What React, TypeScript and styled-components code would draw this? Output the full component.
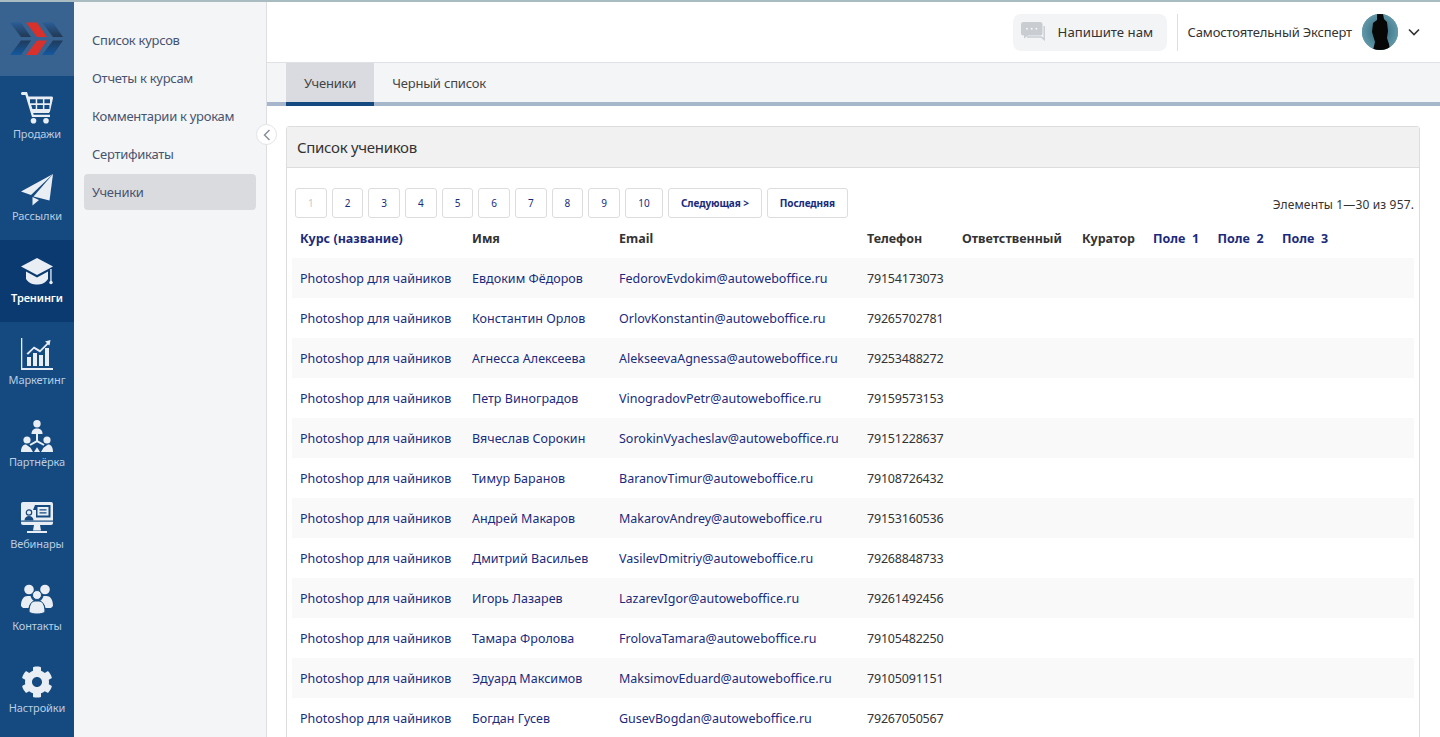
import styled, { createGlobalStyle } from "styled-components";
import { FaCog } from "react-icons/fa";

const GlobalStyle = createGlobalStyle`
  html, body {
    margin: 0;
    height: 100%;
    overflow: hidden;
    background: #fff;
    font-family: "Noto Sans", "Open Sans", sans-serif;
  }
  * { box-sizing: border-box; }
`;

// Page frame
const Page = styled.div`
  width: 100vw;
  height: 100vh;
  display: flex;
  border-top: 2px solid #a9bcc2;
  overflow: hidden;
`;

const Rail = styled.nav`
  width: 74px;
  flex: none;
  background: #154a80;
  display: flex;
  flex-direction: column;
`;

const LogoBox = styled.div`
  height: 74px;
  flex: none;
  background: #38628f;
  padding: 20px 0 0 10px;
`;

const RailItem = styled.a<{ $active?: boolean }>`
  height: 82px;
  flex: none;
  padding-top: 16px;
  display: flex;
  flex-direction: column;
  align-items: center;
  gap: 2px;
  font-size: 11px;
  line-height: 16px;
  letter-spacing: -0.1px;
  color: ${(p) => (p.$active ? "#fff" : "#b9cde2")};
  font-weight: ${(p) => (p.$active ? 600 : 400)};
  background: ${(p) => (p.$active ? "#0b3a70" : "transparent")};
  svg { display: block; width: 32px; height: 32px; color: #e9eef5; }
`;

const SubNav = styled.aside`
  width: 193px;
  flex: none;
  position: relative;
  background: #f4f5f7;
  border-right: 1px solid #dcdee2;
  padding: 20px 10px 0;
  display: flex;
  flex-direction: column;
  gap: 2px;
`;

const SubLink = styled.a<{ $active?: boolean }>`
  height: 36px;
  padding: 0 8px;
  display: flex;
  align-items: center;
  border-radius: 4px;
  font-size: 13px;
  letter-spacing: -0.28px;
  color: #46546f;
  background: ${(p) => (p.$active ? "#dadbdf" : "transparent")};
`;

const Collapse = styled.button`
  position: absolute;
  top: 122px;
  right: -11px;
  width: 21px;
  height: 21px;
  padding: 0;
  border-radius: 50%;
  border: 1px solid #e2e4e8;
  background: #fff;
  display: flex;
  align-items: center;
  justify-content: center;
  z-index: 2;
`;

const Main = styled.main`
  flex: 1;
  min-width: 0;
  display: flex;
  flex-direction: column;
`;

const TopBar = styled.header`
  height: 61px;
  flex: none;
  background: #fff;
  border-bottom: 1px solid #dfe1e4;
  padding-right: 20px;
  display: flex;
  align-items: center;
  justify-content: flex-end;
`;

const WriteUs = styled.button`
  width: 154px;
  height: 37px;
  border: 0;
  border-radius: 8px;
  background: #f3f4f6;
  padding: 0 0 0 8px;
  display: flex;
  align-items: center;
  gap: 12px;
  font: inherit;
  font-size: 13.2px;
  color: #333;
`;

const Divider = styled.div`
  width: 1px;
  height: 37px;
  margin: 0 10px;
  background: #dcdee0;
`;

const UserName = styled.span`
  font-size: 13px;
  letter-spacing: -0.16px;
  color: #333;
`;

const Avatar = styled.div`
  width: 36px;
  height: 36px;
  margin: 0 10px;
  border-radius: 50%;
  overflow: hidden;
  background: #4f8a9d;
  svg { display: block; }
`;

const TabBar = styled.div`
  height: 43px;
  flex: none;
  padding-left: 19px;
  background: #f4f5f7;
  border-bottom: 4px solid #a7b7cb;
  display: flex;
`;

const Tab = styled.a<{ $active?: boolean }>`
  height: 43px;
  padding: 0 18px;
  display: flex;
  align-items: center;
  font-size: 13px;
  letter-spacing: -0.2px;
  color: #444;
  background: ${(p) => (p.$active ? "#d9dbe0" : "transparent")};
  border-bottom: 4px solid ${(p) => (p.$active ? "#154a80" : "transparent")};
`;

const Content = styled.div`
  flex: 1;
  min-height: 0;
  padding: 20px 20px 0 19px;
`;

const Panel = styled.section`
  border: 1px solid #dddddd;
  border-radius: 3px 3px 0 0;
  height: 800px;
  background: #fff;
`;

const PanelTitle = styled.h2`
  margin: 0;
  height: 41px;
  padding: 0 10px;
  display: flex;
  align-items: center;
  font-size: 15px;
  font-weight: 400;
  letter-spacing: -0.3px;
  color: #333;
  background: #f1f1f1;
  border-bottom: 1px solid #dddddd;
`;

const PanelBody = styled.div`
  padding: 20px 5px 0 5px;
`;

const PagerRow = styled.div`
  height: 30px;
  display: flex;
  align-items: center;
  justify-content: space-between;
  padding-left: 3px;
`;

const Pager = styled.div`
  display: flex;
  gap: 5px;
`;

const PageBtn = styled.a<{ $disabled?: boolean; $bold?: boolean; $w: number }>`
  width: ${(p) => p.$w}px;
  height: 30px;
  display: flex;
  align-items: center;
  justify-content: center;
  background: #fff;
  border: 1px solid #dddddd;
  border-radius: 3px;
  font-size: 10px;
  font-weight: ${(p) => (p.$bold ? 700 : 400)};
  letter-spacing: -0.1px;
  color: ${(p) => (p.$disabled ? "#c8c8c8" : "#1a2b7c")};
`;

const Counter = styled.div`
  font-size: 12px;
  letter-spacing: 0.14px;
  color: #333;
  padding: 3px 0 0;
`;

const Row = styled.div<{ $striped?: boolean }>`
  height: 40px;
  display: grid;
  grid-template-columns: 172px 147px 248px 95px 120px 71px 64.5px 64.5px 1fr;
  align-items: center;
  font-size: 12.5px;
  background: ${(p) => (p.$striped ? "#f9f9f9" : "#fff")};
`;

const HeadCell = styled.div<{ $link?: boolean }>`
  padding-left: 8px;
  font-size: 12.5px;
  font-weight: 700;
  white-space: pre;
  color: ${(p) => (p.$link ? "#1a2b7c" : "#333")};
`;

const Cell = styled.a<{ $link?: boolean; $spacing: number }>`
  padding-left: 8px;
  white-space: nowrap;
  letter-spacing: ${(p) => p.$spacing}px;
  color: ${(p) => (p.$link ? "#1a2b7c" : "#333")};
`;

const CartIcon = () => (
  <svg viewBox="0 0 32 32" fill="currentColor">
    <path d="M0 1.500c0-.8.700-1.500 1.500-1.500H6l1.500 4.500H30.500c1 0 1.700.9 1.500 1.800l-3 13.200c-.2.900-1 1.500-1.900 1.500H12.200l.5 1.700H29v2.300H11L4.400 3H1.500C.7 3 0 2.300 0 1.500z" />
    <path fill="#154a80" d="M9 7.300h5.700v3.900H9zM16.200 7.300h5.700v3.900h-5.700zM23.400 7.300h5.600v3.900h-5.600zM10.200 13h4.500v4h-3.300zM16.200 13h5.700v4h-5.700zM23.400 13h5v4h-5z" />
    <circle cx="12.500" cy="28.800" r="2.800" />
    <circle cx="25" cy="28.800" r="2.800" />
  </svg>
);

const PlaneIcon = () => (
  <svg viewBox="0 0 32 32" fill="currentColor">
    <path d="M32 0 L0 17.500 L10 21 Z" />
    <path d="M32 0 L12.500 22.500 L28.500 26.500 Z" />
    <path d="M11.500 23 L11.500 31.500 L18 26 Z" />
  </svg>
);

const CapIcon = () => (
  <svg viewBox="0 0 32 32" fill="currentColor">
    <path d="M16 2 L32 10.500 L16 19 L0 10.500 Z" />
    <path d="M5 15.500 L16 21.500 L27 15.500 V23 C24 27.500 20 28.500 16 28.500 C12 28.500 8 27.500 5 23 Z" />
    <path d="M29.300 13 h1.300 V25 h-1.300z" />
    <circle cx="30" cy="26.500" r="1.700" />
  </svg>
);

const ChartIcon = () => (
  <svg viewBox="0 0 32 32" fill="currentColor">
    <path d="M0 0h1.300v30H32v2H0z" />
    <path d="M6 19h4v9H6zM12 15h4v13h-4zM18 17h4v11h-4zM24 10h4v18h-4z" />
    <path d="M5.500 15.500 L13 8.500 L19 12 L26 5 L24 3.500 L29.500 2 L28.500 7.500 L27 6.500 L19 14.500 L13 10.800 L7 16.800z" />
  </svg>
);

const PartnerIcon = () => (
  <svg viewBox="0 0 32 32" fill="currentColor">
    <circle cx="16" cy="3.800" r="3.700" />
    <path d="M10.500 14c0-4 2.500-5.500 5.500-5.500s5.500 1.500 5.500 5.500z" />
    <path d="M15 14h2v6.500l6.500 3.800-1 1.500-6.500-3.600-6.500 3.600-1-1.500 6.500-3.800z" />
    <circle cx="6" cy="20" r="3.600" />
    <circle cx="26" cy="20" r="3.600" />
    <path d="M0 32c0-5 2-7.500 5-7.500l4.500 3.200 2.500 4.300zM32 32c0-5-2-7.500-5-7.500l-4.500 3.200-2.500 4.300z" />
    <path d="M13 32l3-4.800 3 4.800z" />
  </svg>
);

const WebinarIcon = () => (
  <svg viewBox="0 0 32 32" fill="currentColor">
    <path d="M2 0h28a2 2 0 0 1 2 2v19a2 2 0 0 1-2 2H2a2 2 0 0 1-2-2V2a2 2 0 0 1 2-2z" />
    <path fill="#154a80" d="M0 18.500h32v1.200H0z" />
    <path fill="#154a80" d="M14 3h15.500v12.500H15V8h-3z" />
    <path d="M16.500 5H27.500v8.500H16.500z" />
    <path fill="#154a80" d="M18.500 7.300h7v1.300h-7zM18.500 10.300h7v1.300h-7z" />
    <circle cx="8" cy="10.500" r="2.700" fill="none" stroke="#154a80" strokeWidth="1.200" />
    <path fill="#154a80" d="M3.500 18.500c0-3 2-4.500 4.500-4.500s4.500 1.500 4.500 4.500z" />
    <path d="M13 23h6l1 5.500h-8zM6 29h20v2H6z" />
  </svg>
);

const ContactsIcon = () => (
  <svg viewBox="0 0 32 32" fill="currentColor">
    <circle cx="8" cy="5.500" r="4.800" />
    <circle cx="24" cy="5.500" r="4.800" />
    <path d="M0 22c0-7 3-10 6.500-10h3c1 3 2 4 3.500 5-3 1.500-5 4-5.500 7H2z" />
    <path d="M32 22c0-7-3-10-6.500-10h-3c-1 3-2 4-3.500 5 3 1.500 5 4 5.500 7H30z" />
    <circle cx="16" cy="11" r="4.500" stroke="#154a80" strokeWidth="1" />
    <path d="M8 28c0-8 3-11 6-11h4c3 0 6 3 6 11-2 1.500-5 2-8 2s-6-.5-8-2z" stroke="#154a80" strokeWidth="1" />
  </svg>
);

const LogoIcon = () => (
  <svg width="54" height="34" viewBox="0 0 54 34" style={{ display: "block" }}>
    <defs>
      <linearGradient id="chevBlue" x1="0" y1="0" x2="0" y2="1">
        <stop offset="0" stopColor="#2a5d97" />
        <stop offset="0.48" stopColor="#22364f" />
        <stop offset="1" stopColor="#14589f" />
      </linearGradient>
    </defs>
    <path fill="url(#chevBlue)" d="M0 .5h11l10 14.500H11zM11 18.500h10L11 33H0zM32 .5h11l10 14.500H43zM43 18.500h10L43 33H32z" />
    <path fill="#d8312c" d="M16 .5h11l10 14.500H27zM27 18.500h10L27 33H16z" />
  </svg>
);

const ChatIcon = () => (
  <svg width="25" height="21" viewBox="0 0 25 21" fill="#c9ccd1">
    <rect x="0" y="0" width="21.500" height="13.500" rx="2.500" />
    <path d="M3 13v3.500l4.500-3.500z" />
    <path d="M23.200 4v13.500l-3-2.500H6" fill="none" stroke="#c9ccd1" strokeWidth="1.400" />
    <circle cx="6" cy="6.800" r="1" fill="#f3f4f6" />
    <circle cx="10.700" cy="6.800" r="1" fill="#f3f4f6" />
    <circle cx="15.400" cy="6.800" r="1" fill="#f3f4f6" />
  </svg>
);

const Silhouette = () => (
  <svg width="36" height="36" viewBox="0 0 36 36">
    <defs>
      <radialGradient id="ava" cx="0.5" cy="0.5" r="0.6">
        <stop offset="0" stopColor="#2a6478" />
        <stop offset="1" stopColor="#6da3b3" />
      </radialGradient>
    </defs>
    <rect width="36" height="36" fill="url(#ava)" />
    <path fill="#070707" d="M15 0h6l1 5 3 3 1 9-1 7 2 6 1 6H11l2-8-3-10 1-9 4-3z" />
  </svg>
);

const railItems = [
  { label: "Продажи", icon: <CartIcon /> },
  { label: "Рассылки", icon: <PlaneIcon /> },
  { label: "Тренинги", icon: <CapIcon />, active: true },
  { label: "Маркетинг", icon: <ChartIcon /> },
  { label: "Партнёрка", icon: <PartnerIcon /> },
  { label: "Вебинары", icon: <WebinarIcon /> },
  { label: "Контакты", icon: <ContactsIcon /> },
  { label: "Настройки", icon: <FaCog /> },
];

const subLinks = ["Список курсов", "Отчеты к курсам", "Комментарии к урокам", "Сертификаты", "Ученики"];

const pages = [
  { t: "1", w: 31.67, off: true },
  { t: "2", w: 31.67 },
  { t: "3", w: 31.67 },
  { t: "4", w: 31.67 },
  { t: "5", w: 31.67 },
  { t: "6", w: 31.67 },
  { t: "7", w: 31.67 },
  { t: "8", w: 31.67 },
  { t: "9", w: 31.67 },
  { t: "10", w: 38 },
];

const students = [
  ["Евдоким Фёдоров", "FedorovEvdokim@autoweboffice.ru", "79154173073"],
  ["Константин Орлов", "OrlovKonstantin@autoweboffice.ru", "79265702781"],
  ["Агнесса Алексеева", "AlekseevaAgnessa@autoweboffice.ru", "79253488272"],
  ["Петр Виноградов", "VinogradovPetr@autoweboffice.ru", "79159573153"],
  ["Вячеслав Сорокин", "SorokinVyacheslav@autoweboffice.ru", "79151228637"],
  ["Тимур Баранов", "BaranovTimur@autoweboffice.ru", "79108726432"],
  ["Андрей Макаров", "MakarovAndrey@autoweboffice.ru", "79153160536"],
  ["Дмитрий Васильев", "VasilevDmitriy@autoweboffice.ru", "79268848733"],
  ["Игорь Лазарев", "LazarevIgor@autoweboffice.ru", "79261492456"],
  ["Тамара Фролова", "FrolovaTamara@autoweboffice.ru", "79105482250"],
  ["Эдуард Максимов", "MaksimovEduard@autoweboffice.ru", "79105091151"],
  ["Богдан Гусев", "GusevBogdan@autoweboffice.ru", "79267050567"],
];

const App = () => (
  <Page>
    <GlobalStyle />
    <Rail>
      <LogoBox>
        <LogoIcon />
      </LogoBox>
      {railItems.map((item) => (
        <RailItem key={item.label} $active={item.active}>
          {item.icon}
          {item.label}
        </RailItem>
      ))}
    </Rail>

    <SubNav>
      {subLinks.map((link) => (
        <SubLink key={link} $active={link === "Ученики"}>
          {link}
        </SubLink>
      ))}
      <Collapse>
        <svg width="8" height="12" viewBox="0 0 8 12" fill="none" stroke="#8a8f98" strokeWidth="1.500">
          <path d="M6.500 1 L1.500 6 L6.500 11" />
        </svg>
      </Collapse>
    </SubNav>

    <Main>
      <TopBar>
        <WriteUs>
          <ChatIcon />
          Напишите нам
        </WriteUs>
        <Divider />
        <UserName>Самостоятельный Эксперт</UserName>
        <Avatar>
          <Silhouette />
        </Avatar>
        <svg width="12" height="8" viewBox="0 0 12 8" fill="none" stroke="#333" strokeWidth="1.600">
          <path d="M1 1.500 L6 6.500 L11 1.500" />
        </svg>
      </TopBar>

      <TabBar>
        <Tab $active>Ученики</Tab>
        <Tab>Черный список</Tab>
      </TabBar>

      <Content>
        <Panel>
          <PanelTitle>Список учеников</PanelTitle>
          <PanelBody>
            <PagerRow>
              <Pager>
                {pages.map((p) => (
                  <PageBtn key={p.t} $w={p.w} $disabled={p.off}>
                    {p.t}
                  </PageBtn>
                ))}
                <PageBtn $w={94} $bold>
                  Следующая &gt;
                </PageBtn>
                <PageBtn $w={81} $bold>
                  Последняя
                </PageBtn>
              </Pager>
              <Counter>Элементы 1—30 из 957.</Counter>
            </PagerRow>

            <Row>
              <HeadCell $link>Курс (название)</HeadCell>
              <HeadCell>Имя</HeadCell>
              <HeadCell>Email</HeadCell>
              <HeadCell>Телефон</HeadCell>
              <HeadCell>Ответственный</HeadCell>
              <HeadCell>Куратор</HeadCell>
              <HeadCell $link>Поле  1</HeadCell>
              <HeadCell $link>Поле  2</HeadCell>
              <HeadCell $link>Поле  3</HeadCell>
            </Row>

            {students.map(([name, email, phone], i) => (
              <Row key={email} $striped={i % 2 === 0}>
                <Cell $link $spacing={0}>Photoshop для чайников</Cell>
                <Cell $link $spacing={0.04}>{name}</Cell>
                <Cell $link $spacing={0}>{email}</Cell>
                <Cell $spacing={-0.2}>{phone}</Cell>
              </Row>
            ))}
          </PanelBody>
        </Panel>
      </Content>
    </Main>
  </Page>
);

export default App;
